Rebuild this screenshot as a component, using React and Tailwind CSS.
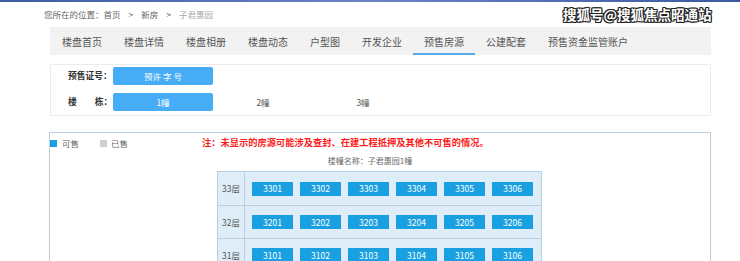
const tabs = ['楼盘首页', '楼盘详情', '楼盘相册', '楼盘动态', '户型图', '开发企业', '预售房源', '公建配套', '预售资金监管账户'];

const floors = [
    { name: '33层', units: ['3301', '3302', '3303', '3304', '3305', '3306'] },
    { name: '32层', units: ['3201', '3202', '3203', '3204', '3205', '3206'] },
    { name: '31层', units: ['3101', '3102', '3103', '3104', '3105', '3106'] },
];

const App = () => {
    return (
        <div className="relative w-[740px] h-[261px] overflow-hidden bg-white font-['Noto_Sans_CJK_SC','Noto_Sans',sans-serif]">
            {/* top strip */}
            <div className="h-[2px] bg-gradient-to-r from-[#3c5aa6] via-[#6d84c4] to-[#3a58a4]" />

            {/* breadcrumb */}
            <div className="mt-[6px] pl-[44px] h-[12px] flex items-center text-[8.5px] leading-[12px] text-[#666]">
                <span>您所在的位置：首页</span>
                <span className="mx-[8px]">&gt;</span>
                <span>新房</span>
                <span className="mx-[8px]">&gt;</span>
                <span className="text-[#aaa]">子君惠园</span>
            </div>

            {/* watermark */}
            <div className="absolute left-[563px] top-[6px] text-[13.5px] font-bold leading-[17px] text-white [text-shadow:1px_0_0_#222,-1px_0_0_#222,0_1px_0_#222,0_-1px_0_#222,1px_1px_0_#222,-1px_-1px_0_#222,1px_-1px_0_#222,-1px_1px_0_#222]">
                搜狐号@搜狐焦点昭通站
            </div>

            {/* tabs */}
            <div className="mt-[7px] ml-[50px] w-[661px] h-[28px] bg-[#f2f2f2] flex pl-[1px]">
                {tabs.map((t) => (
                    <div
                        key={t}
                        className={`h-full px-[11px] flex items-center text-[10px] text-[#555] ${t === '预售房源' ? 'border-b-2 border-[#58aae6] pt-[2px]' : ''}`}
                    >
                        {t}
                    </div>
                ))}
            </div>

            {/* filter */}
            <div className="mt-[9px] ml-[50px] w-[661px] h-[52px] border border-[#ececec] pt-[2px] pl-[17px] flex flex-col gap-[8px]">
                <div className="flex items-center h-[18px]">
                    <span className="w-[45px] shrink-0 whitespace-nowrap text-[8.75px] font-bold text-[#333]">预售证号：</span>
                    <div className="w-[100px] h-[18px] rounded-[2px] bg-[#46acf5] flex items-center justify-center text-[8.5px] text-white">
                        预许 字 号
                    </div>
                </div>
                <div className="flex items-center h-[18px]">
                    <span className="w-[45px] shrink-0 flex whitespace-nowrap text-[8.75px] font-bold text-[#333]">
                        <span>楼</span>
                        <span className="ml-[18px]">栋：</span>
                    </span>
                    <div className="w-[100px] h-[18px] rounded-[2px] bg-[#46acf5] flex items-center justify-center text-[8.5px] text-white">
                        1幢
                    </div>
                    <div className="w-[100px] flex justify-center text-[8.5px] text-[#555]">2幢</div>
                    <div className="w-[100px] flex justify-center text-[8.5px] text-[#555]">3幢</div>
                </div>
            </div>

            {/* houses */}
            <div className="mt-[16px] ml-[49px] w-[662px] h-[140px] border border-[#bccde0]">
                <div className="h-[20px] flex items-center">
                    <span className="w-[7px] h-[7px] bg-[#1a9fe0]" />
                    <span className="ml-[5px] text-[8.5px] text-[#666]">可售</span>
                    <span className="ml-[21px] w-[7px] h-[7px] bg-[#d3cfcf]" />
                    <span className="ml-[4px] text-[8.5px] text-[#666]">已售</span>
                    <span className="ml-[74px] text-[9.25px] font-bold text-[#ff1a1a]">
                        注：未显示的房源可能涉及查封、在建工程抵押及其他不可售的情况。
                    </span>
                </div>
                <div className="mt-[2px] h-[12px] leading-[12px] text-center pr-[20px] text-[8px] text-[#666]">
                    楼幢名称：子君惠园1幢
                </div>
                <div className="mt-[4px] ml-[167px] w-[325px] border border-[#b9d0e3] bg-[#deedf7]">
                    {floors.map((f, i) => (
                        <div key={f.name} className={`flex h-[33px] ${i > 0 ? 'border-t border-[#b9d0e3]' : ''}`}>
                            <div className="w-[27px] border-r border-[#b9d0e3] flex items-center justify-center text-[8.5px] text-[#555]">
                                {f.name}
                            </div>
                            <div className="flex items-center gap-[7px] pl-[7px]">
                                {f.units.map((u) => (
                                    <div key={u} className="w-[41px] h-[14px] bg-[#1a9fe0] flex items-center justify-center text-[8.5px] text-white">
                                        {u}
                                    </div>
                                ))}
                            </div>
                        </div>
                    ))}
                </div>
            </div>
        </div>
    );
};

export default App;
